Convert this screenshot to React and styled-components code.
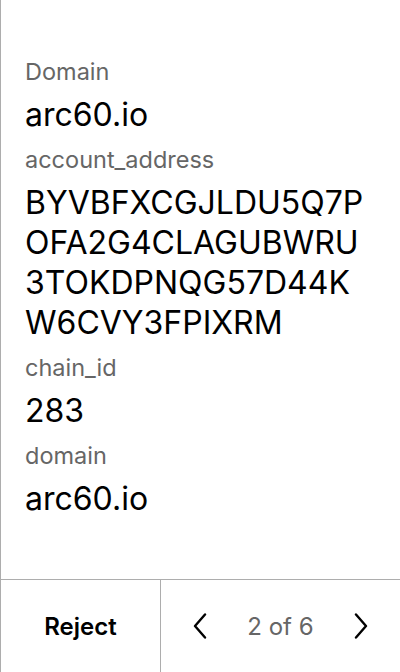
import React from "react";
import styled, { createGlobalStyle } from "styled-components";

const GlobalStyle = createGlobalStyle`
  html, body {
    margin: 0;
    padding: 0;
    background: #fff;
  }
  body {
    font-family: Inter, "Noto Sans", sans-serif;
  }
`;

const Screen = styled.div`
  height: 672px;
  width: 400px;
  box-sizing: border-box;
  border-left: 1px solid #adadad;
  display: flex;
  flex-direction: column;
`;

const Content = styled.div`
  flex: 1;
  padding: 58px 24px 0 24px;
  display: flex;
  flex-direction: column;
  gap: 11px;
`;

const Field = styled.div`
  display: flex;
  flex-direction: column;
  gap: 9px;
`;

const Label = styled.div`
  font-size: 23.5px;
  line-height: 28px;
  color: #666;
`;

const Value = styled.div`
  font-size: 32px;
  line-height: 40px;
  color: #000;
  word-break: break-all;
`;

const Footer = styled.div`
  height: 92px;
  border-top: 1px solid #adadad;
  display: flex;
`;

const RejectButton = styled.button`
  width: 160px;
  border: none;
  border-right: 1px solid #adadad;
  background: none;
  font-family: Inter, sans-serif;
  font-size: 24px;
  font-weight: 600;
  color: #000;
  padding: 0;
`;

const Pager = styled.div`
  flex: 1;
  display: flex;
  align-items: center;
  justify-content: center;
  gap: 35px;
`;

const NavButton = styled.button`
  width: 24px;
  height: 32px;
  border: none;
  background: none;
  padding: 0;
  display: flex;
  align-items: center;
  justify-content: center;
`;

const PageText = styled.span`
  font-size: 24px;
  color: #666;
`;

const Chevron = ({ dir }) => (
  <svg width="14" height="26" viewBox="0 0 14 26" fill="none">
    <path
      d={dir === "left" ? "M12 1.5 L2 13 L12 24.5" : "M2 1.5 L12 13 L2 24.5"}
      stroke="#000"
      strokeWidth="2.4"
      strokeLinecap="round"
      strokeLinejoin="round"
    />
  </svg>
);

const fields = [
  { label: "Domain", value: "arc60.io" },
  {
    label: "account_address",
    value: "BYVBFXCGJLDU5Q7POFA2G4CLAGUBWRU3TOKDPNQG57D44KW6CVY3FPIXRM",
  },
  { label: "chain_id", value: "283" },
  { label: "domain", value: "arc60.io" },
];

export default function App() {
  return (
    <>
      <GlobalStyle />
      <Screen>
        <Content>
          {fields.map((f) => (
            <Field key={f.label}>
              <Label>{f.label}</Label>
              <Value>{f.value}</Value>
            </Field>
          ))}
        </Content>
        <Footer>
          <RejectButton>Reject</RejectButton>
          <Pager>
            <NavButton>
              <Chevron dir="left" />
            </NavButton>
            <PageText>2 of 6</PageText>
            <NavButton>
              <Chevron dir="right" />
            </NavButton>
          </Pager>
        </Footer>
      </Screen>
    </>
  );
}
